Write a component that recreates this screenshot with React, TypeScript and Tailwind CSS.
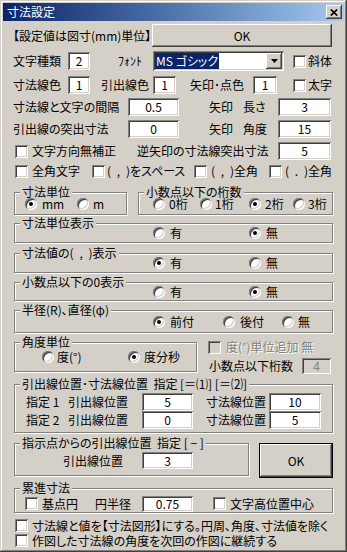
import type { ReactNode } from 'react'

const sunken = 'shadow-[inset_1px_1px_#808080,inset_-1px_-1px_#ffffff,inset_2px_2px_#404040,inset_-2px_-2px_#d4d0c8]'
const raised = 'shadow-[inset_-1px_-1px_#404040,inset_1px_1px_#ffffff,inset_-2px_-2px_#808080,inset_2px_2px_#d4d0c8]'

function Check({ className = '', disabled }: { className?: string; disabled?: boolean }) {
    return <div className={`w-[13px] h-[13px] shrink-0 ${disabled ? 'bg-[#d4d0c8]' : 'bg-white'} ${sunken} ${className}`} />
}

function Radio({ on, className = '' }: { on?: boolean; className?: string }) {
    return (
        <div className={`w-[12px] h-[12px] shrink-0 rounded-full bg-white flex items-center justify-center ${sunken} ${className}`}>
            {on && <div className="w-[4px] h-[4px] rounded-full bg-black" />}
        </div>
    )
}

function Field({ value, className = '', disabled }: { value: string; className?: string; disabled?: boolean }) {
    return (
        <div
            className={`shrink-0 flex items-center justify-center ${disabled ? 'bg-[#d4d0c8] text-[#808080]' : 'bg-white'} ${sunken} ${className}`}
        >
            {value}
        </div>
    )
}

function Group({ legend, className = '', children }: { legend: ReactNode; className?: string; children?: ReactNode }) {
    return (
        <div className={`relative shrink-0 border border-[#808080] shadow-[1px_1px_0_#ffffff,inset_1px_1px_0_#ffffff] ${className}`}>
            <span className="absolute left-[5px] -top-[7px] px-[2px] bg-[#d4d0c8] leading-[12px] whitespace-pre">{legend}</span>
            {children}
        </div>
    )
}

// "( , )" drawn with the wide spacing of the original bitmap font
const Paren = ({ ch }: { ch: string }) => (
    <span className="inline-flex w-[23px] justify-between">
        <span>(</span>
        <span>{ch}</span>
        <span>)</span>
    </span>
)

export default function App() {
    return (
        <div className="w-[347px] h-[552px] overflow-hidden bg-[#d4d0c8] flex flex-col text-[12px] leading-[14px] text-black [font-family:'Noto_Sans_CJK_JP',sans-serif] [font-feature-settings:'palt'] shadow-[inset_-1px_-1px_#404040,inset_1px_1px_#d4d0c8,inset_-2px_-2px_#808080,inset_2px_2px_#ffffff]">
            {/* title bar */}
            <div className="mx-[3px] mt-[3px] h-[18px] shrink-0 flex items-center justify-between pl-[4px] pr-[2px] bg-linear-to-r from-[#0a246a] to-[#a6caf0]">
                <span className="text-white">寸法設定</span>
                <div className={`w-[16px] h-[14px] bg-[#d4d0c8] flex items-center justify-center ${raised}`}>
                    <svg width="8" height="7" viewBox="0 0 8 7">
                        <path d="M0.8 0.5 L7.2 6.5 M7.2 0.5 L0.8 6.5" stroke="black" strokeWidth="1.7" />
                    </svg>
                </div>
            </div>

            <div className="mt-[3px] h-[23px] shrink-0 flex items-center pl-[13px]">
                <span className="w-[139px] shrink-0 whitespace-nowrap">【設定値は図寸(mm)単位】</span>
                <div className={`w-[180px] h-[23px] shrink-0 flex items-center justify-center ${raised}`}>OK</div>
            </div>

            <div className="mt-[4px] h-[20px] shrink-0 flex items-center pl-[13px] whitespace-nowrap">
                <span className="w-[55px] shrink-0">文字種類</span>
                <Field className="w-[22px] h-[18px]" value="2" />
                <span className="ml-[28px] w-[35px] shrink-0">ﾌｫﾝﾄ</span>
                <div className={`w-[131px] h-[20px] shrink-0 bg-white flex items-center px-[2px] ${sunken}`}>
                    <span className="h-[16px] px-[1px] bg-[#0a246a] text-white flex items-center">MS ゴシック</span>
                    <div className={`ml-auto w-[16px] h-[16px] bg-[#d4d0c8] flex items-center justify-center ${raised}`}>
                        <svg width="7" height="4" viewBox="0 0 7 4">
                            <polygon points="0,0 7,0 3.5,4" fill="black" />
                        </svg>
                    </div>
                </div>
                <Check className="ml-[9px]" />
                <span className="ml-[2px]">斜体</span>
            </div>

            <div className="mt-[5px] h-[18px] shrink-0 flex items-center pl-[13px] whitespace-nowrap">
                <span className="w-[55px] shrink-0">寸法線色</span>
                <Field className="w-[22px] h-[18px]" value="1" />
                <span className="ml-[11px] w-[52px] shrink-0">引出線色</span>
                <Field className="w-[23px] h-[18px]" value="1" />
                <span className="ml-[14px] w-[63px] shrink-0">矢印･点色</span>
                <Field className="w-[24px] h-[18px]" value="1" />
                <Check className="ml-[16px]" />
                <span className="ml-[2px]">太字</span>
            </div>

            <div className="mt-[4px] h-[18px] shrink-0 flex items-center pl-[13px] whitespace-nowrap">
                <span className="w-[115px] shrink-0">寸法線と文字の間隔</span>
                <Field className="w-[51px] h-[18px]" value="0.5" />
                <span className="ml-[30px] w-[69px] shrink-0">
                    矢印<span className="ml-[10px]">長さ</span>
                </span>
                <Field className="w-[53px] h-[18px]" value="3" />
            </div>

            <div className="mt-[4px] h-[18px] shrink-0 flex items-center pl-[13px] whitespace-nowrap">
                <span className="w-[115px] shrink-0">引出線の突出寸法</span>
                <Field className="w-[51px] h-[18px]" value="0" />
                <span className="ml-[30px] w-[69px] shrink-0">
                    矢印<span className="ml-[10px]">角度</span>
                </span>
                <Field className="w-[53px] h-[18px]" value="15" />
            </div>

            <div className="mt-[4px] h-[18px] shrink-0 flex items-center pl-[15px] whitespace-nowrap">
                <Check />
                <span className="ml-[4px] w-[105px] shrink-0">文字方向無補正</span>
                <span className="w-[141px] shrink-0">逆矢印の寸法線突出寸法</span>
                <Field className="w-[53px] h-[18px]" value="5" />
            </div>

            <div className="mt-[3px] h-[16px] shrink-0 flex items-center pl-[15px] whitespace-nowrap">
                <Check />
                <span className="ml-[4px] w-[60px] shrink-0">全角文字</span>
                <Check />
                <span className="ml-[2px] w-[87px] shrink-0 flex">
                    <Paren ch="," />
                    をスペース
                </span>
                <Check />
                <span className="ml-[4px] w-[58px] shrink-0 flex">
                    <Paren ch="," />
                    全角
                </span>
                <Check />
                <span className="ml-[3px] flex">
                    <Paren ch="." />
                    全角
                </span>
            </div>

            {/* units / decimals */}
            <div className="mt-[13px] h-[23px] shrink-0 flex pl-[14px] whitespace-nowrap leading-[12px]">
                <Group legend="寸法単位" className="w-[113px] h-[23px]">
                    <div className="h-full flex items-center pl-[10px]">
                        <Radio on />
                        <span className="ml-[5px] w-[35px] shrink-0">mm</span>
                        <Radio />
                        <span className="ml-[4px]">m</span>
                    </div>
                </Group>
                <Group legend="小数点以下の桁数" className="ml-[11px] w-[195px] h-[23px]">
                    <div className="h-full flex items-center pl-[14px]">
                        <Radio />
                        <span className="ml-[4px] w-[31px] shrink-0">0桁</span>
                        <Radio />
                        <span className="ml-[3px] w-[34px] shrink-0">1桁</span>
                        <Radio on />
                        <span className="ml-[4px] w-[28px] shrink-0">2桁</span>
                        <Radio />
                        <span className="ml-[3px]">3桁</span>
                    </div>
                </Group>
            </div>

            <div className="mt-[8px] shrink-0 pl-[14px] leading-[12px]">
                <Group legend="寸法単位表示" className="w-[319px] h-[20px]">
                    <div className="h-full flex items-center pl-[138px]">
                        <Radio />
                        <span className="ml-[5px] w-[79px] shrink-0">有</span>
                        <Radio on />
                        <span className="ml-[5px]">無</span>
                    </div>
                </Group>
            </div>

            <div className="mt-[10px] shrink-0 pl-[14px] leading-[12px]">
                <Group
                    legend={
                        <span className="inline-flex">
                            寸法値の<Paren ch="," />表示
                        </span>
                    }
                    className="w-[319px] h-[20px]"
                >
                    <div className="h-full flex items-center pl-[138px]">
                        <Radio on />
                        <span className="ml-[5px] w-[79px] shrink-0">有</span>
                        <Radio />
                        <span className="ml-[5px]">無</span>
                    </div>
                </Group>
            </div>

            <div className="mt-[9px] shrink-0 pl-[14px] leading-[12px]">
                <Group legend="小数点以下の0表示" className="w-[319px] h-[19px]">
                    <div className="h-full flex items-center pl-[138px]">
                        <Radio />
                        <span className="ml-[5px] w-[79px] shrink-0">有</span>
                        <Radio on />
                        <span className="ml-[5px]">無</span>
                    </div>
                </Group>
            </div>

            <div className="mt-[9px] shrink-0 pl-[14px] leading-[12px]">
                <Group legend="半径(R)、直径(φ)" className="w-[319px] h-[23px]">
                    <div className="h-full flex items-center pl-[138px] whitespace-nowrap">
                        <Radio on />
                        <span className="ml-[5px] w-[53px] shrink-0">前付</span>
                        <Radio />
                        <span className="ml-[5px] w-[42px] shrink-0">後付</span>
                        <Radio />
                        <span className="ml-[4px]">無</span>
                    </div>
                </Group>
            </div>

            {/* angle unit */}
            <div className="mt-[9px] h-[30px] shrink-0 flex pl-[14px] whitespace-nowrap">
                <Group legend="角度単位" className="w-[183px] h-[30px]">
                    <div className="h-full flex items-center pl-[27px]">
                        <Radio />
                        <span className="ml-[3px] w-[71px] shrink-0">度(°)</span>
                        <Radio on />
                        <span className="ml-[4px]">度分秒</span>
                    </div>
                </Group>
                <div className="ml-[11px] flex flex-col">
                    <div className="h-[10px] flex items-center">
                        <Check disabled />
                        <span className="ml-[5px] text-[#808080] [text-shadow:1px_1px_0_#ffffff]">度(°)単位追加 無</span>
                    </div>
                    <div className="mt-[6px] h-[16px] flex items-center">
                        <span className="ml-[1px] w-[93px] shrink-0">小数点以下桁数</span>
                        <Field disabled className="w-[29px] h-[16px]" value="4" />
                    </div>
                </div>
            </div>

            {/* leader / dimension line positions */}
            <div className="mt-[12px] shrink-0 pl-[14px]">
                <Group legend="引出線位置･寸法線位置  指定 [＝⑴] [＝⑵]" className="w-[319px] h-[49px]">
                    <div className="flex flex-col pt-[8px] pl-[11px] whitespace-nowrap">
                        <div className="h-[18px] flex items-center">
                            <span className="w-[42px] shrink-0">指定 1</span>
                            <span className="w-[74px] shrink-0">引出線位置</span>
                            <Field className="w-[51px] h-[18px]" value="5" />
                            <span className="ml-[13px] w-[63px] shrink-0">寸法線位置</span>
                            <Field className="w-[52px] h-[18px]" value="10" />
                        </div>
                        <div className="h-[18px] flex items-center">
                            <span className="w-[42px] shrink-0">指定 2</span>
                            <span className="w-[74px] shrink-0">引出線位置</span>
                            <Field className="w-[51px] h-[18px]" value="0" />
                            <span className="ml-[13px] w-[63px] shrink-0">寸法線位置</span>
                            <Field className="w-[52px] h-[18px]" value="5" />
                        </div>
                    </div>
                </Group>
            </div>

            <div className="mt-[10px] h-[35px] shrink-0 flex pl-[14px] whitespace-nowrap">
                <Group legend="指示点からの引出線位置  指定 [ − ]" className="w-[235px] h-[33px]">
                    <div className="h-full flex items-center pt-[2px] pl-[48px]">
                        <span className="w-[79px] shrink-0">引出線位置</span>
                        <Field className="w-[51px] h-[17px]" value="3" />
                    </div>
                </Group>
                <div className="ml-[10px] w-[74px] h-[35px] shrink-0 border border-black">
                    <div className={`w-full h-full flex items-center justify-center ${raised}`}>OK</div>
                </div>
            </div>

            <div className="mt-[10px] shrink-0 pl-[14px]">
                <Group legend="累進寸法" className="w-[319px] h-[25px]">
                    <div className="h-full flex items-center pt-[6px] pl-[10px] whitespace-nowrap">
                        <Check />
                        <span className="ml-[4px] w-[53px] shrink-0">基点円</span>
                        <span className="w-[47px] shrink-0">円半径</span>
                        <Field className="w-[51px] h-[16px]" value="0.75" />
                        <Check className="ml-[20px]" />
                        <span className="ml-[4px]">文字高位置中心</span>
                    </div>
                </Group>
            </div>

            <div className="mt-[5px] h-[15px] shrink-0 flex items-center pl-[15px] whitespace-nowrap">
                <Check />
                <span className="ml-[4px]">寸法線と値を【寸法図形】にする。円周、角度、寸法値を除く</span>
            </div>
            <div className="h-[15px] shrink-0 flex items-center pl-[15px] whitespace-nowrap">
                <Check />
                <span className="ml-[4px]">作図した寸法線の角度を次回の作図に継続する</span>
            </div>
        </div>
    )
}
